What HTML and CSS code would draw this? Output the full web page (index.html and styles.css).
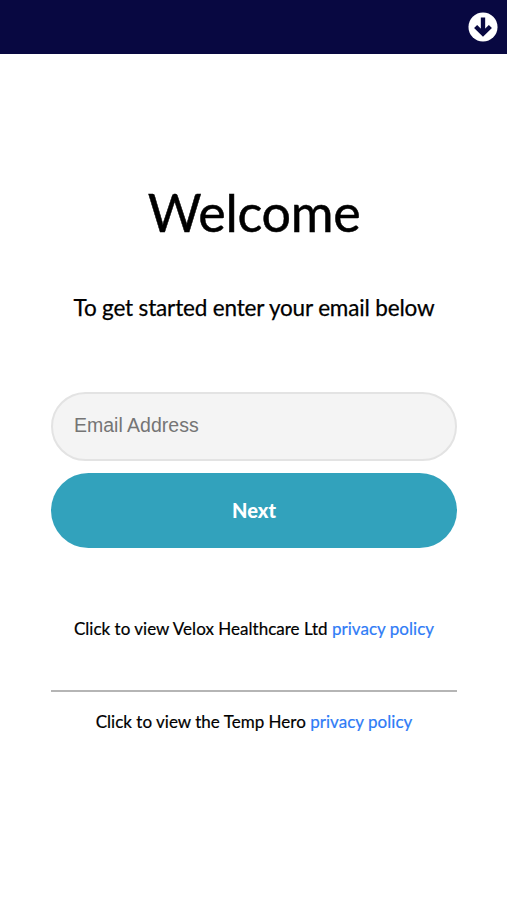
FILE: index.html
```html
<!DOCTYPE html>
<html lang="en">
<head>
    <meta charset="UTF-8">
    <meta name="viewport" content="width=device-width, initial-scale=1.0">
    <title>Welcome</title>
    <link rel="stylesheet" href="styles.css">
</head>
<body>
    <header class="top-bar">
        <svg class="download-icon" viewBox="0 0 512 512" aria-hidden="true">
            <circle cx="256" cy="256" r="248" fill="#fff"/>
            <path d="M256 92v280M130 246l126 126 126-126" fill="none" stroke="#080841" stroke-width="74"/>
        </svg>
    </header>

    <main class="container">
        <h1>Welcome</h1>
        <p class="intro">To get started enter your email below</p>

        <form class="email-form">
            <input type="email" class="email-input" placeholder="Email Address">
            <button type="button" class="next-btn">Next</button>
        </form>

        <p class="policy">Click to view Velox Healthcare Ltd <a href="#">privacy policy</a></p>
        <hr>
        <p class="policy">Click to view the Temp Hero <a href="#">privacy policy</a></p>
    </main>
</body>
</html>
```
FILE: styles.css
```css
* {
    box-sizing: border-box;
}

body {
    margin: 0;
    font-family: Lato, sans-serif;
    background-color: #fff;
    color: #000;
    text-align: center;
}

.top-bar {
    display: flex;
    justify-content: flex-end;
    align-items: center;
    height: 54px;
    padding-right: 9px;
    background-color: #080841;
}

.download-icon {
    width: 30px;
    height: 30px;
}

.container {
    padding: 126px 50px 0 51px;
}

h1 {
    margin: 0;
    font-size: 52px;
    font-weight: 400;
    line-height: 64px;
    letter-spacing: -0.3px;
    -webkit-text-stroke: 0.5px #000;
}

.intro {
    margin: 50px 0 0;
    font-size: 22.5px;
    line-height: 28px;
    letter-spacing: -0.16px;
    white-space: nowrap;
    -webkit-text-stroke: 0.25px #000;
}

.email-form {
    display: flex;
    flex-direction: column;
    gap: 12px;
    margin-top: 70px;
}

.email-input {
    width: 100%;
    height: 69px;
    padding: 0 21px 2px;
    border: 2px solid #e3e3e3;
    border-radius: 35px;
    background-color: #f4f4f4;
    font-family: "Liberation Sans", Arial, sans-serif;
    font-size: 19.5px;
}

.email-input::placeholder {
    color: #757575;
}

.next-btn {
    height: 75px;
    padding: 0 6px 2px;
    border: none;
    border-radius: 38px;
    background-color: #32a2bc;
    color: #fff;
    font-family: Lato, sans-serif;
    font-size: 20px;
    font-weight: 900;
}

.policy {
    margin: 70px 0 0;
    font-size: 17px;
    line-height: 22px;
    letter-spacing: 0.02px;
    white-space: nowrap;
    -webkit-text-stroke: 0.2px;
}

.policy a {
    color: #2f7bf6;
    text-decoration: none;
}

hr {
    height: 2px;
    margin: 50px 0 0;
    border: none;
    background-color: #b5b5b5;
}

hr + .policy {
    margin-top: 19px;
}
```
